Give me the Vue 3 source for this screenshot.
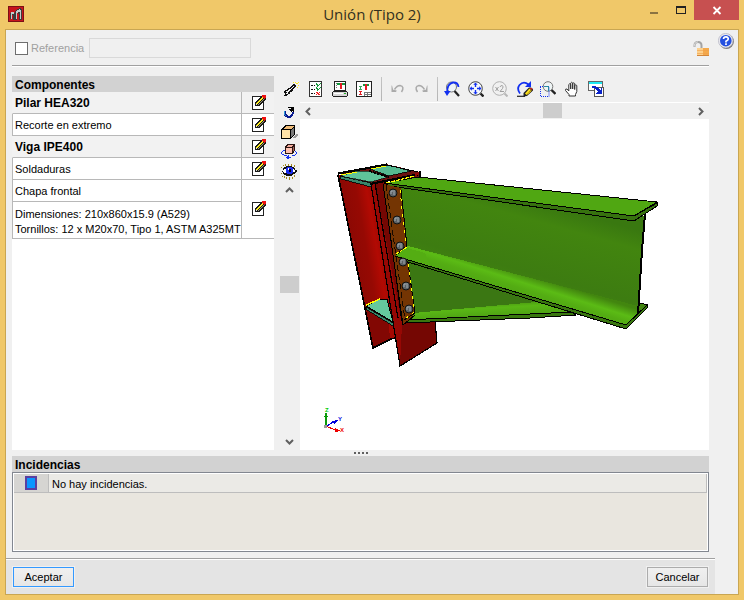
<script setup>
import { ref } from 'vue'

const reference = ref('')
const hasReference = ref(false)

const rows = [
  { text: 'Pilar HEA320', head: true, edit: true },
  { text: 'Recorte en extremo', edit: true },
  { text: 'Viga IPE400', head: true, edit: true },
  { text: 'Soldaduras', edit: true },
  { text: 'Chapa frontal', edit: true, span: 2 },
  { lines: ['Dimensiones: 210x860x15.9 (A529)', 'Tornillos: 12 x M20x70, Tipo 1, ASTM A325MT'] }
]

const bolts = [
  [393, 193], [397, 220], [400, 246], [403, 262], [406, 286], [409, 309]
]
</script>

<template>
  <div class="window">
    <header class="titlebar">
      <svg class="app-icon" width="16" height="16" viewBox="0 0 16 16" shape-rendering="crispEdges">
        <rect width="16" height="16" fill="#7d1015" />
        <rect x="1" y="1" width="14" height="14" fill="#c8141c" />
        <path d="M2 13V8l1-2h2l2 1 1-3 4-2 2 2v10h-3V8L9 7v7H5V9H4v4z" fill="#3f3a3a" />
        <path d="M3 6h3v2H4v5H3zM8 5l4-2v1h1v9h-1V6h-2v1H9v6H8z" fill="#c3cccc" />
      </svg>
      <h1 class="title">Unión (Tipo 2)</h1>
      <div class="win-buttons">
        <button class="win-btn" aria-label="Minimizar">
          <svg width="27" height="20" viewBox="0 0 27 20"><path d="M10 12h8v2h-8z" fill="#8b7341" /></svg>
        </button>
        <button class="win-btn" aria-label="Maximizar">
          <svg width="27" height="20" viewBox="0 0 27 20" shape-rendering="crispEdges"><path d="M9 6h10v8H9zM10 8v5h8V8z" fill="#222" fill-rule="evenodd" /></svg>
        </button>
        <button class="win-btn close" aria-label="Cerrar">
          <svg width="45" height="20" viewBox="0 0 45 20"><path d="M19.500 7l7 7M26.500 7l-7 7" stroke="#fff" stroke-width="1.800" /></svg>
        </button>
      </div>
    </header>

    <div class="client">
      <main class="main">
        <div class="body">
          <div class="ref-row">
            <input id="ref-check" v-model="hasReference" type="checkbox" class="check" disabled />
            <label for="ref-check" class="ref-label">Referencia</label>
            <input v-model="reference" type="text" class="ref-input" aria-label="Referencia" disabled />
            <svg class="lock" width="16" height="17" viewBox="0 0 16 17">
              <path d="M1.500 7V5.500Q1.500 2 5 2t3.500 3.500V9" fill="none" stroke="#a4a4a4" stroke-width="2" />
              <path d="M1.300 6.500V5Q2 1.800 5 1.800" fill="none" stroke="#dcdcdc" />
              <rect x="4" y="8" width="12" height="8" fill="#f4a94c" />
              <rect x="4" y="8" width="6" height="7" fill="#fdd08c" />
              <path d="M4 10.500h12M4 13.500h12" stroke="#f0a04a" stroke-opacity=".6" />
              <path d="M4 15.500h12" stroke="#d2853a" />
            </svg>
          </div>

          <div class="work">
            <section class="components">
              <h2 class="panel-title">Componentes</h2>
              <div class="list">
                <table class="table">
                  <colgroup><col /><col class="edit-col" /></colgroup>
                  <tbody>
                    <tr v-for="(row, i) in rows" :key="i" :class="{ head: row.head }">
                      <td class="name" :class="{ tall: row.lines }">
                        <template v-if="row.lines"><div v-for="l in row.lines" :key="l">{{ l }}</div></template>
                        <template v-else>{{ row.text }}</template>
                      </td>
                      <td v-if="row.edit" class="edit" :rowspan="row.span || 1">
                        <button class="edit-btn" :aria-label="'Editar ' + row.text">
                          <svg width="16" height="16" viewBox="0 0 16 16" shape-rendering="crispEdges">
                            <path d="M1 2h12v14H1z" fill="#222" />
                            <path d="M2 3h10v12H2z" fill="#fff" />
                            <path d="M4 12V9L10 2h3l2 2v1L8 12z" fill="#1a1a1a" />
                            <path d="M5 9h1V8h1V7h1V6h1V5h1V4h1V3h1v2h-1v1h-1v1H9v1H8v1H7v1H5z" fill="#fff021" />
                            <path d="M7 10h1V9h1V8h1V7h1V6h1V5h1v1h-1v1h-1v1h-1v1H9v1H8v1H7z" fill="#a09c78" />
                            <path d="M5 10h1v1H5z" fill="#ddd" />
                            <path d="M11 1h4v3h-1v1h-1V4h-1V3h-1z" fill="#ee1111" />
                          </svg>
                        </button>
                      </td>
                    </tr>
                  </tbody>
                </table>
              </div>
            </section>

            <section class="viewer">
              <div class="side-tools">
                <button class="tool first" aria-label="Generar">
                  <svg width="16" height="16" viewBox="0 0 16 16" shape-rendering="crispEdges">
                    <path d="M1 10h1V9h2V8h1V7h2V6h1V5h1V4h1V3h2v1h1v2h-1v1h-1v1h-1v2H9v1H7v2H5v1H4v1H1v-1h1v-2H1z" fill="#111" />
                    <path d="M3 10h2V9h1V8h2V7h1V6h1V5h1v1h-1v1H9v1H8v1H7v1H6v1H5v2H3v-1h1v-1H3z" fill="#f4f4f4" />
                    <path d="M12 1h1v1h-1zM15 1h1v1h-1zM13 2h2v1h-2zM15 4h1v1h-1zM10 1h1v1h-1zM14 6h1v1h-1z" fill="#ffe91a" />
                  </svg>
                </button>
                <button class="tool" aria-label="Girar">
                  <svg width="16" height="16" viewBox="0 0 16 16" shape-rendering="crispEdges">
                    <path d="M3 7h2v3h1v1h1v1h2v-1h1v-1h1V8h2v2h-1v2h-1v1h-1v1H6v-1H4v-1H3z" fill="#0a1a90" />
                    <path d="M3 7h1v4h1v1H4v-1H3z" fill="#2d9ad8" />
                    <path d="M7 3h6v5h-1V7h-1v1h-1V7H9V6H8V5h2V4H7z" fill="#000" />
                  </svg>
                </button>
                <button class="tool" aria-label="Vista 3D">
                  <svg width="17" height="16" viewBox="0 0 17 16" shape-rendering="crispEdges">
                    <path d="M11 14l5-4h1v2l-3 2z" fill="#999" />
                    <path d="M0 5l4-4h10v9l-4 5H0z" fill="#000" />
                    <path d="M1 6h8v8H1z" fill="#ffe2a8" />
                    <path d="M2 5l3-3h8l-3 3z" fill="#f0bc78" />
                    <path d="M10 6l3-3v7l-3 4z" fill="#777" />
                  </svg>
                </button>
                <button class="tool" aria-label="Rotar vista">
                  <svg width="16" height="16" viewBox="0 0 16 16" shape-rendering="crispEdges">
                    <path d="M4 6H2v1H1v1H0v2h1v1h2v1h3v1h1v-1H6v-1H3v-1H1V8h1V7h2zM13 7h1v1h1v2h-1v1h-3v1h3v-1h1v-1h1V8h-1V7h-1V6h-1z" fill="#1732ef" />
                    <path d="M7 11h1v4H7zM5 13h5v1H5zM6 12h1v3H6z" fill="#1732ef" />
                    <path d="M4 3l2-3h8v6l-2 4H4z" fill="#2a1512" />
                    <path d="M5 4h6v5H5z" fill="#ffc0b0" />
                    <path d="M6 3l1-2h5l-1 2z" fill="#f4ab9c" />
                    <path d="M12 4l1-2v4l-1 2z" fill="#a56058" />
                  </svg>
                </button>
                <button class="tool" aria-label="Visibilidad">
                  <svg width="16" height="16" viewBox="0 0 16 16" shape-rendering="crispEdges">
                    <path d="M2 1h1v1H2zM4 0h1v2H4zM7 0h1v2H7zM10 0h1v2h-1zM13 1h1v2h-1zM0 3h1v1H0zM1 12h1v1H1zM3 12h1v2H3zM5 13h1v2H5zM8 13h1v3H8zM11 13h1v2h-1zM13 11h1v2h-1zM0 9h1v1H0z" fill="#a28a20" />
                    <path d="M1 5h1V4h1V3h2V2h6v1h2v1h1v2h2v2h-1v1h-1v1h-2v1h-1v1H5v-1H3v-1H2V8H1V7h1V5z" fill="#111" />
                    <path d="M3 5h2v4H3V8H2V6h1zM12 5h1v1h1v2h-2z" fill="#fff" />
                    <path d="M6 3h5v1h1v5h-1v1H6V9H5V4h1z" fill="#1b2cf0" />
                    <path d="M8 5h2v3H8z" fill="#001" />
                    <path d="M7 4h1v2H7z" fill="#fff" />
                  </svg>
                </button>
                <div class="vscroll">
                  <button class="arrow" aria-label="Subir"><svg width="9" height="6" viewBox="0 0 9 6"><path d="M1 5l3.500-3.500L8 5" fill="none" stroke="#606060" stroke-width="2" /></svg></button>
                  <div class="v-before"></div>
                  <div class="v-thumb"></div>
                  <div class="v-after"></div>
                  <button class="arrow" aria-label="Bajar"><svg width="9" height="6" viewBox="0 0 9 6"><path d="M1 1l3.500 3.500L8 1" fill="none" stroke="#606060" stroke-width="2" /></svg></button>
                </div>
              </div>

              <div class="stage">
                <div class="toolbar">
                  <button class="tb" aria-label="Comprobar">
                    <svg width="16" height="16" viewBox="0 0 16 16" shape-rendering="crispEdges">
                      <path d="M1 0h13v16H1z" fill="#333" />
                      <path d="M2 1h11v14H2z" fill="#fff" />
                      <path d="M3 4h2v1H3zM6 4h1v1H6zM3 8h2v1H3zM6 8h1v1H6zM3 12h2v1H3zM6 12h1v1H6z" fill="#111" />
                      <path d="M8 2h1v1h1v1h1V3h1V2h1v1h-1v1h-1v1h-1v1H9V4H8zM8 6h1v1h1v1h1V7h1V6h1v1h-1v1h-1v1h-1v1H9V8H8z" fill="#159a3c" />
                      <path d="M8 11h2v1h1v-1h1v1h-1v1h1v1h-2v-1H9v1H8v-1h1v-1H8z" fill="#e22" />
                    </svg>
                  </button>
                  <button class="tb" aria-label="Imprimir">
                    <svg width="16" height="16" viewBox="0 0 16 16" shape-rendering="crispEdges">
                      <path d="M2 0h12v10H2z" fill="#222" />
                      <path d="M3 1h10v8H3z" fill="#fff" />
                      <path d="M4 2h1v1H4zM4 4h1v1H4zM4 6h1v1H4z" fill="#777" />
                      <path d="M5 2h3v2H5zM10 2h3v2h-3z" fill="#139a3c" />
                      <path d="M8 2h2v6H8z" fill="#e31b23" />
                      <path d="M1 10h14v1h1v4h-1v1H1v-1H0v-4h1z" fill="#222" />
                      <path d="M1 11h14v4H1z" fill="#d8d8d8" />
                      <path d="M2 12h9v1H2z" fill="#fff" />
                      <path d="M12 12h2v1h-2z" fill="#2a2" />
                    </svg>
                  </button>
                  <button class="tb" aria-label="Plano">
                    <svg width="16" height="16" viewBox="0 0 16 16" shape-rendering="crispEdges">
                      <path d="M0 0h16v16H0z" fill="#222" />
                      <path d="M1 1h14v14H1z" fill="#fff" />
                      <path d="M7 3h2v2H7zM11 3h2v2h-2z" fill="#139a3c" />
                      <path d="M9 3h2v6H9zM3 10h3v1H5v2h1v1H3v-1h1v-2H3z" fill="#e31b23" />
                      <path d="M3 5h3v1H5v2h1v1H3V8h1V6H3z" fill="#3aa35a" />
                      <path d="M8 11h7v4H8zM9 12v1h2v-1zM12 12v1h3v-1zM9 14v1h2v-1zM12 14v1h3v-1z" fill="#777" fill-rule="evenodd" />
                    </svg>
                  </button>
                  <span class="sep wide"></span>
                  <button class="tb" aria-label="Deshacer" disabled>
                    <svg width="16" height="16" viewBox="0 0 16 16">
                      <path d="M4.500 8.500Q7 4.500 10 4.500 15 5.500 11.500 11" fill="none" stroke="#aaa" stroke-width="1.500" />
                      <path d="M2 4.500l1.200 4.200 3.600.8L6 11H1.500V4.500z" fill="#aaa" />
                    </svg>
                  </button>
                  <button class="tb" aria-label="Rehacer" disabled>
                    <svg width="16" height="16" viewBox="0 0 16 16">
                      <path d="M10.500 8.500Q8 4.500 5 4.500 0 5.500 3.500 11" fill="none" stroke="#aaa" stroke-width="1.500" />
                      <path d="M13 4.500l-1.200 4.200-3.600.8L9 11h4.500V4.500z" fill="#aaa" />
                    </svg>
                  </button>
                  <span class="sep"></span>
                  <button class="tb" aria-label="Zoom anterior">
                    <svg width="16" height="16" viewBox="0 0 16 16">
                      <circle cx="7.500" cy="6" r="5" fill="#eef4f8" stroke="#777" />
                      <path d="M10.500 10l4.500 5" stroke="#222" stroke-width="2.200" />
                      <path d="M3 12Q3 2.500 9 1.500q5-.3 5.500 4.500" fill="none" stroke="#1230f0" stroke-width="1.800" />
                      <path d="M0 10h6.500L3 15z" fill="#1230f0" />
                    </svg>
                  </button>
                  <button class="tb" aria-label="Ver todo">
                    <svg width="16" height="16" viewBox="0 0 16 16">
                      <circle cx="7.500" cy="7.500" r="6.800" fill="#f5f8fb" stroke="#444" />
                      <path d="M12.500 12.500l3 3" stroke="#222" stroke-width="2.400" />
                      <path d="M7.500 1.500l2.200 2.300H8.200V6H6.800V3.800H5.300zM7.500 13.500l2.200-2.300H8.200V9H6.800v2.200H5.300zM1.500 7.500l2.300 2.200V8.200H6V6.800H3.800V5.300zM13.500 7.500l-2.300 2.200V8.200H9V6.800h2.200V5.300z" fill="#1230f0" />
                    </svg>
                  </button>
                  <button class="tb" aria-label="Zoom por dos" disabled>
                    <svg width="16" height="16" viewBox="0 0 16 16">
                      <circle cx="7.500" cy="7.500" r="6.800" fill="#f0f0f0" stroke="#b0b0b0" />
                      <path d="M12.500 12.500l3 3" stroke="#b8b8b8" stroke-width="2" />
                      <path d="M3.500 6l3 4M6.500 6l-3 4M8 6Q8.500 4.500 10 4.500q2 .500.5 3L8 10.500h4" fill="none" stroke="#a0a0a0" />
                    </svg>
                  </button>
                  <button class="tb" aria-label="Redibujar">
                    <svg width="17" height="16" viewBox="0 0 17 16">
                      <path d="M4 12.500Q.5 8 3.500 4q4-4.500 9-.5" fill="none" stroke="#1230f0" stroke-width="1.800" />
                      <path d="M15 0v6H9z" fill="#1230f0" />
                      <path d="M1 15.300h8" stroke="#222" stroke-width="1.200" />
                      <path d="M7.500 15.500v-3.500L13 6.500h2l2 1.500v1.500L11 15z" fill="#222" />
                      <path d="M9 12.500l4.500-5 1.500 1.500-4.500 5z" fill="#ffe21a" />
                      <path d="M11.500 13.500l4-4" stroke="#d9b300" />
                      <path d="M13.500 7h2l.8 1v1.300z" fill="#e22" />
                    </svg>
                  </button>
                  <button class="tb" aria-label="Zoom ventana">
                    <svg width="16" height="16" viewBox="0 0 16 16">
                      <circle cx="8" cy="5.500" r="4.800" fill="#eef4f4" stroke="#777" />
                      <path d="M11.500 9l4 4" stroke="#222" stroke-width="2.400" />
                      <path d="M0 5.500h9v10H.5V5" fill="none" stroke="#1230f0" stroke-dasharray="1 1" />
                      <path d="M4 5.500h4.500V10" fill="none" stroke="#2a8ca0" />
                    </svg>
                  </button>
                  <button class="tb" aria-label="Desplazar">
                    <svg width="16" height="16" viewBox="0 0 16 16">
                      <path d="M5 15v-1.500L1.500 9.500Q1.200 7.500 3 8l1.800 2V3.500q.9-1.500 1.900 0V8 2q1-1.500 2 0v6V2.500q1-1.400 2 0V8.500 4.500q1.200-1.300 2.100 0V10.500l-1.300 3V15z" fill="#fff" stroke="#333" />
                    </svg>
                  </button>
                  <button class="tb" aria-label="Ventanas">
                    <svg width="16" height="16" viewBox="0 0 16 16" shape-rendering="crispEdges">
                      <path d="M0 0h15v10H0z" fill="#666" />
                      <path d="M1 3h13v6H1z" fill="#fff" />
                      <path d="M1 1h13v2H1z" fill="#1fe8f4" />
                      <path d="M6 6h10v10H6z" fill="#555" />
                      <path d="M7 7h8v8H7z" fill="#fff" />
                      <path d="M4 5h4v1h2v1h1v1h1v1h1V7h1v6H8v-1h1v-1h1v-1H9V9H8V8H7V7H4z" fill="#0a22c8" />
                    </svg>
                  </button>
                </div>
                <div class="hscroll">
                  <button class="arrow" aria-label="Izquierda"><svg width="6" height="9" viewBox="0 0 6 9"><path d="M5 1L1.500 4.500 5 8" fill="none" stroke="#606060" stroke-width="2" /></svg></button>
                  <div class="h-before"></div>
                  <div class="h-thumb"></div>
                  <div class="h-after"></div>
                  <button class="arrow" aria-label="Derecha"><svg width="6" height="9" viewBox="0 0 6 9"><path d="M1 1l3.500 3.500L1 8" fill="none" stroke="#606060" stroke-width="2" /></svg></button>
                </div>
                <div class="canvas">
                  <svg class="scene" viewBox="300 119 409 331" shape-rendering="crispEdges">
                    <defs>
                      <linearGradient id="redFace" gradientUnits="userSpaceOnUse" x1="345" y1="260" x2="386" y2="253">
                        <stop offset="0" stop-color="#860804" />
                        <stop offset=".55" stop-color="#960903" />
                        <stop offset=".8" stop-color="#b20a03" />
                        <stop offset="1" stop-color="#9a0803" />
                      </linearGradient>
                      <linearGradient id="web" gradientUnits="userSpaceOnUse" x1="530" y1="200" x2="505" y2="290">
                        <stop offset="0" stop-color="#397810" />
                        <stop offset=".2" stop-color="#42850f" />
                        <stop offset=".75" stop-color="#3d7c11" />
                        <stop offset="1" stop-color="#42860f" />
                      </linearGradient>
                      <linearGradient id="flange" gradientUnits="userSpaceOnUse" x1="520" y1="272" x2="513" y2="294">
                        <stop offset="0" stop-color="#42860f" />
                        <stop offset=".4" stop-color="#5bbb15" />
                        <stop offset=".65" stop-color="#54ad13" />
                        <stop offset="1" stop-color="#4fa513" />
                      </linearGradient>
                      <linearGradient id="haunch" gradientUnits="userSpaceOnUse" x1="480" y1="301" x2="481" y2="318">
                        <stop offset="0" stop-color="#42860f" />
                        <stop offset=".45" stop-color="#59b715" />
                        <stop offset="1" stop-color="#4da014" />
                      </linearGradient>
                    </defs>

                    <!-- column -->
                    <path d="M338 174L371 186 389 182 400 338 392 338 373 348z" fill="url(#redFace)" />
                    <path d="M366 307L373 348 391 339 395 325z" fill="#820703" />
                    <path d="M387 303L393 306 396 338 390 339z" fill="#a50903" />
                    <path d="M338 175L373 348 391 339 395 338" fill="none" stroke="#000" stroke-width="1.600" />
                    <path d="M366 306L380 299H387L393 322z" fill="#65c89d" stroke="#000" />
                    <path d="M366 307L393 323V326L367 310z" fill="#38866a" stroke="#000" stroke-width=".8" />
                    <path d="M366 305L380 299" stroke="#ff0" stroke-width="1.500" />
                    <path d="M371 184L384 181 402 323 435 320 437 343 400 366z" fill="#750703" stroke="#000" stroke-width="1.200" />
                    <path d="M371 184L375 183 402 324 400 366z" fill="#960804" />
                    <path d="M371 184L400 366M375 183L398 318" stroke="#000" stroke-width="1.200" fill="none" />

                    <!-- column top -->
                    <path d="M338 173L386 164 420 172 419 177 371 184z" fill="#6c1310" />
                    <path d="M340 176L357 171 369 171 388 177 371 182z" fill="#5fc39a" stroke="#000" stroke-width=".6" />
                    <path d="M340 176L371 183V187L341 179z" fill="#38866a" stroke="#000" stroke-width=".8" />
                    <path d="M370 169L388 165 411 171 389 176z" fill="#56ba91" stroke="#000" stroke-width=".8" />
                    <path d="M338 173.500L387 164.500M370 184L420 174M420 171v6" stroke="#000" stroke-width="2.200" fill="none" />
                    <path d="M387 165L418 172" stroke="#000" />
                    <path d="M369 171L389 177" stroke="#000" stroke-width="2" stroke-dasharray="3 1" />
                    <path d="M341 175L357 172M371 169L386 166" stroke="#ff0" stroke-width="1" />
                    <path d="M415 173l4-1v3l-4 1z" fill="#930804" />

                    <!-- haunch -->
                    <path d="M406 257L572 309 575 313 405 320z" fill="#3b7713" />
                    <path d="M413 313L548 301 576 312 405 321z" fill="url(#haunch)" />
                    <path d="M405 320L572 312 576 315 530 318 405 323z" fill="#39770f" stroke="#000" />

                    <!-- beam -->
                    <path d="M396 186L645 216 638 314 407 250z" fill="url(#web)" />
                    <path d="M395 256L408 246 500 270 638 306 641 303 647 305 626 326z" fill="url(#flange)" />
                    <path d="M640 303L648 305" stroke="#000" />
                    <path d="M395 256L626 325 647 305V308L626 329 395 258z" fill="#39760f" stroke="#000" />
                    <path d="M645 214L642 250 638 314" fill="none" stroke="#000" stroke-width="2" />
                    <path d="M384 183L418 177 657 202 634 216z" fill="#50a712" stroke="#000" />
                    <path d="M384 183L634 216 657 203V206L634 221 390 186z" fill="#37720f" stroke="#000" />

                    <!-- end plate -->
                    <path d="M383 184L401 188 407 247 396 255 408 263 415 313 403 325z" fill="#743503" />
                    <path d="M383 184L403 325 415 315" fill="none" stroke="#000" />
                    <path d="M386 185L405 320" fill="none" stroke="#000" stroke-width=".8" stroke-dasharray="6 3" />
                    <path d="M401 190L407 246 396 255 408 263 415 313 404 320" fill="none" stroke="#000" />
                    <path d="M400 190L406 246M408 264L414 312 405 319" fill="none" stroke="#ff0" stroke-dasharray="3 5" />
                    <path d="M386 183L415 176" stroke="#ff0" stroke-width="1.200" stroke-dasharray="4 1" />
                    <path d="M395 256L407 248 425 253 430 266z" fill="#54ad13" />
                    <path d="M395 256L430 266.500" stroke="#000" />
                    <path d="M396 254L407 247" stroke="#ff0" stroke-dasharray="4 1" />
                    <g v-for="(b, i) in bolts" :key="i" shape-rendering="geometricPrecision">
                      <circle :cx="b[0]" :cy="b[1]" r="4" fill="#5d6266" stroke="#111" />
                      <path :d="`M${b[0] - 2} ${b[1] + 1}v-3h2M${b[0] + 1} ${b[1] - 3}v5`" stroke="#a4acb2" fill="none" />
                    </g>

                    <!-- axes -->
                    <path d="M326 426V416" stroke="#0a9a0a" stroke-width="2" />
                    <path d="M324 417l2-5 2 5z" fill="#0a9a0a" />
                    <path d="M327 426L333 422" stroke="#00d" />
                    <path d="M332 421l6-1-4 4z" fill="#00d" />
                    <path d="M327 426.500L335 430" stroke="#e00" />
                    <path d="M335 428l6 3-6 1z" fill="#e00" />
                    <rect x="324" y="425" width="3" height="3" fill="#999" />
                    <text x="325" y="412" class="axis" fill="#0c0">Z</text>
                    <text x="338" y="421" class="axis" fill="#00d">Y</text>
                    <text x="340" y="432" class="axis" fill="#e00">X</text>
                  </svg>
                </div>
              </div>
            </section>
          </div>

          <div class="splitter"><i></i><i></i><i></i><i></i></div>

          <section class="issues">
            <h2 class="panel-title">Incidencias</h2>
            <div class="issue-box">
              <div class="issue">
                <span class="issue-mark"><span class="square"></span></span>
                <span class="issue-text">No hay incidencias.</span>
              </div>
            </div>
          </section>
        </div>

        <footer class="footer">
          <button class="btn primary">Aceptar</button>
          <button class="btn">Cancelar</button>
        </footer>
      </main>

      <aside class="help">
        <button class="help-btn" aria-label="Ayuda">
          <svg width="16" height="16" viewBox="0 0 16 16">
            <circle cx="8.500" cy="8.500" r="7.400" fill="#777" />
            <circle cx="7.700" cy="7.700" r="7.300" fill="#e8e8ee" stroke="#aab" stroke-width=".6" />
            <circle cx="7.800" cy="7.700" r="5.800" fill="#2450e0" />
            <path d="M5.500 6Q5.800 3.800 8 3.900q2.500.2 2.200 2.200Q10 7.300 8 8.300V9.500M8 10.300v1.800" fill="none" stroke="#fff" stroke-width="1.700" />
          </svg>
        </button>
      </aside>
    </div>
  </div>
</template>

<style>
body {
  margin: 0;
}
</style>

<style scoped>
.window {
  box-sizing: border-box;
  min-height: 100vh;
  display: flex;
  flex-direction: column;
  padding: 0 5px 5px;
  background: #f0c869;
  color: #000;
  font-family: "Liberation Sans", Arial, sans-serif;
  font-size: 11px;
  line-height: 15px;
}
button {
  margin: 0;
  padding: 0;
  border: 0;
  background: none;
  font: inherit;
  color: inherit;
}
svg {
  display: block;
}
h1,
h2 {
  margin: 0;
}
.titlebar {
  display: grid;
  grid-template-columns: 1fr auto 1fr;
  height: 29px;
}
.app-icon {
  margin: 6px 0 0 3px;
}
.title {
  font-family: "Open Sans", "Noto Sans", sans-serif;
  font-size: 15px;
  font-weight: 400;
  line-height: 29px;
  color: #33301f;
}
.win-buttons {
  display: flex;
  align-items: flex-start;
  justify-content: flex-end;
}
.close {
  background: #c75050;
}
.client {
  flex: 1;
  display: flex;
  border: 1px solid #c9a652;
  background: #f0f0f0;
}
.main {
  flex: 1;
  min-width: 0;
  display: flex;
  flex-direction: column;
}
.body {
  flex: 1;
  display: flex;
  flex-direction: column;
  padding: 0 6px 6px;
}
.ref-row {
  box-sizing: border-box;
  display: flex;
  align-items: center;
  height: 36px;
  padding: 1px 0 0 3px;
  border-bottom: 1px solid #a0a0a0;
  box-shadow: 0 1px #fff;
  margin-bottom: 10px;
}
.check {
  appearance: none;
  width: 13px;
  height: 13px;
  margin: 0;
  border: 1px solid #6e6e6e;
  background: #fff;
}
.ref-label {
  width: 52px;
  margin: 0 6px 0 3px;
  color: #a0a0a0;
}
.ref-input {
  box-sizing: border-box;
  width: 162px;
  height: 20px;
  padding: 0 4px;
  border: 1px solid #d9d9d9;
  background: #f0f0f0;
  font: inherit;
}
.lock {
  margin-left: auto;
}
.work {
  flex: 1;
  display: flex;
  gap: 6px;
}
.components {
  width: 262px;
  display: flex;
  flex-direction: column;
}
.panel-title {
  height: 16px;
  padding-left: 3px;
  background: #d2d2d2;
  font-size: 12px;
  line-height: 18px;
}
.list {
  flex: 1;
  background: #fff;
}
.table {
  width: 100%;
  table-layout: fixed;
  border-collapse: separate;
  border-spacing: 0;
}
.table td {
  box-sizing: border-box;
  padding: 0;
  border-bottom: 1px solid #b8b8b8;
}
.edit-col {
  width: 32px;
}
.name {
  height: 22px;
  border-left: 1px solid #b8b8b8;
  border-right: 1px solid #b8b8b8;
  white-space: nowrap;
}
.table .name {
  padding: 1px 0 0 2px;
}
.table .tall {
  height: 37px;
  padding-top: 3px;
}
.head {
  background: #f2f2f2;
  font-size: 12px;
  font-weight: 700;
}
.table .head .name {
  border-left-color: #f2f2f2;
}
.table .edit {
  padding: 0 0 2px 2px;
}
.edit-btn {
  display: block;
  margin: 0 auto;
}
.viewer {
  flex: 1;
  min-width: 0;
  display: flex;
}
.side-tools {
  width: 20px;
  display: flex;
  flex-direction: column;
}
.tool {
  height: 20px;
  display: flex;
  align-items: center;
  padding-left: 1px;
}
.first {
  height: 26px;
  padding-left: 3px;
}
.vscroll {
  flex: 1;
  display: flex;
  flex-direction: column;
  padding-right: 1px;
}
.arrow {
  flex: none;
  width: 16px;
  height: 16px;
  display: flex;
  align-items: center;
  justify-content: center;
}
.vscroll .arrow {
  width: 19px;
}
.v-before {
  flex: 78;
}
.v-thumb {
  height: 17px;
  background: #cdcdcd;
}
.v-after {
  flex: 141;
}
.stage {
  flex: 1;
  min-width: 0;
  display: flex;
  flex-direction: column;
}
.toolbar {
  display: flex;
  align-items: center;
  height: 26px;
  padding-left: 4px;
  border-bottom: 1px solid #fff;
}
.tb {
  width: 24px;
  height: 24px;
  display: flex;
  align-items: center;
  justify-content: center;
}
.sep {
  box-sizing: border-box;
  width: 6px;
  height: 24px;
  border-right: 2px solid transparent;
  background: linear-gradient(#c4c4c4, #b4b4b4) right / 1px 100% no-repeat;
}
.wide {
  width: 10px;
  border-right-width: 4px;
}
.hscroll {
  display: flex;
  height: 16px;
}
.h-before {
  flex: 227;
}
.h-thumb {
  width: 19px;
  height: 15px;
  background: #cdcdcd;
}
.h-after {
  flex: 131;
}
.canvas {
  flex: 1;
  background: #fff;
}
.scene {
  width: 100%;
  height: auto;
}
.axis {
  font-size: 6px;
  font-weight: 700;
}
.splitter {
  display: flex;
  justify-content: center;
  align-items: center;
  gap: 2px;
  height: 6px;
}
.splitter i {
  width: 2px;
  height: 2px;
  background: #606060;
}
.issue-box {
  box-sizing: border-box;
  min-height: 80px;
  padding: 1px;
  border: 1px solid #828790;
  background: #e9e6df;
  box-shadow: inset 0 0 0 1px #fff;
}
.issue {
  display: flex;
  height: 18px;
  border-right: 1px solid #bdbdbd;
  border-bottom: 1px solid #bdbdbd;
  background: #ebeae6;
}
.issue-mark {
  width: 34px;
  display: flex;
  align-items: center;
  justify-content: center;
  border-right: 1px solid #bdbdbd;
  background: #d6d5d2;
}
.square {
  box-sizing: border-box;
  width: 12px;
  height: 14px;
  border: 2px solid #5a3fa0;
  background: #0a96ff;
}
.issue-text {
  padding-left: 3px;
  line-height: 20px;
}
.footer {
  display: flex;
  justify-content: space-between;
  align-items: flex-start;
  height: 27px;
  padding: 8px 7px 0;
  border-top: 1px solid #a0a0a0;
  background: #e4e4e4;
  box-shadow: inset 0 1px #fff;
}
.btn {
  box-sizing: border-box;
  min-width: 61px;
  height: 20px;
  border: 1px solid #acacac;
  background: linear-gradient(#f0f0f0, #e6e6e6);
  box-shadow: 0 0 0 1px #f0f0f0;
}
.primary {
  border-color: #3399ff;
}
.help {
  width: 23px;
}
.help-btn {
  margin: 3px 0 0 3px;
}
</style>
